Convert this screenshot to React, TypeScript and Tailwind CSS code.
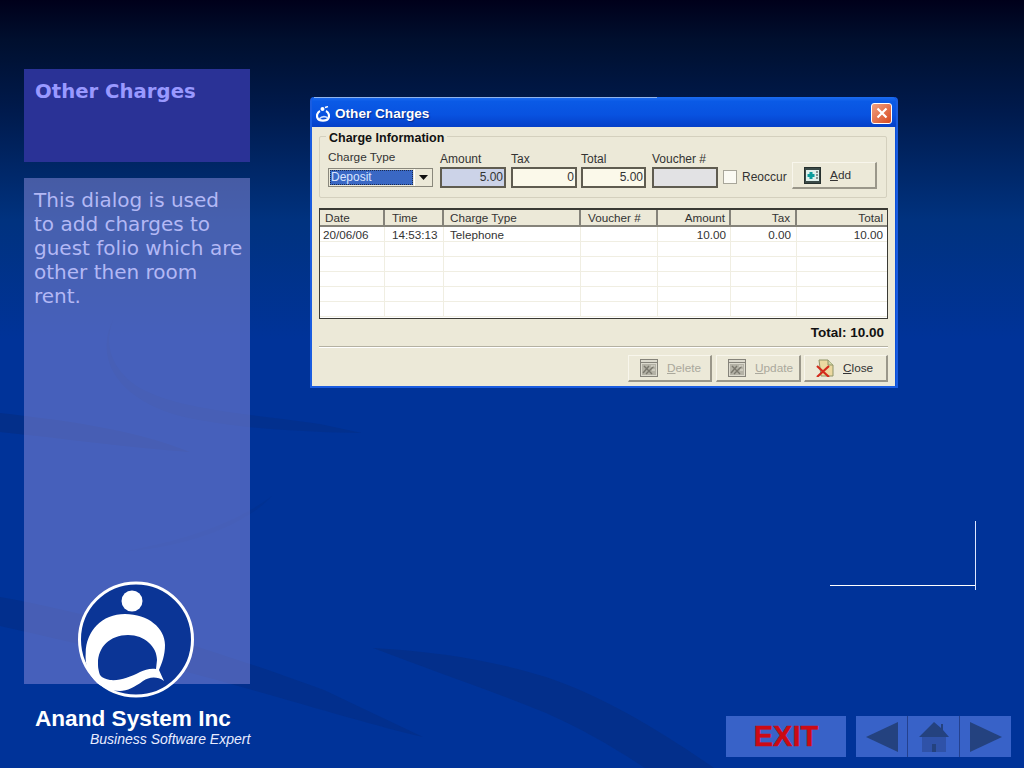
import React from 'react';

const grid = [
  { name: 'Date', w: 'w-[65px]', cell: '20/06/06', align: 'text-left pl-[5px]', cellAlign: 'text-left pl-[3px]' },
  { name: 'Time', w: 'w-[59px]', cell: '14:53:13', align: 'text-left pl-[7px]', cellAlign: 'text-left pl-[7px]' },
  { name: 'Charge Type', w: 'w-[137px]', cell: 'Telephone', align: 'text-left pl-[6px]', cellAlign: 'text-left pl-[6px]' },
  { name: 'Voucher #', w: 'w-[77px]', cell: '', align: 'text-left pl-[7px]', cellAlign: 'text-left pl-[7px]' },
  { name: 'Amount', w: 'w-[73px]', cell: '10.00', align: 'text-right pr-[4px]', cellAlign: 'text-right pr-[4px]' },
  { name: 'Tax', w: 'w-[66px]', cell: '0.00', align: 'text-right pr-[5px]', cellAlign: 'text-right pr-[5px]' },
  { name: 'Total', w: 'flex-1', cell: '10.00', align: 'text-right pr-[4px]', cellAlign: 'text-right pr-[4px]' },
];

const Background = () => (
  <svg className="absolute inset-0" width="1024" height="768" viewBox="0 0 1024 768" fill="none">
    {/* crescent */}
    <path d="M114 318 C104 340 108 368 140 388 C180 410 250 414 320 424 L362 433 C300 432 230 428 180 416 C120 400 92 360 114 318 Z" fill="#062a78" opacity="0.3" />
    {/* left band */}
    <path d="M0 413 C60 420 130 428 190 452 C130 448 60 438 0 432 Z" fill="#062a78" opacity="0.45" />
    {/* faint wisp */}
    <path d="M272 496 C240 520 190 540 120 552 C180 548 240 530 272 496 Z" fill="#062a78" opacity="0.18" />
    {/* lower bands */}
    <path d="M0 597 C100 615 200 645 324 690 L423 737 C330 715 200 670 0 626 Z" fill="#062a78" opacity="0.38" />
    <path d="M373 648 C440 652 490 660 546 677 C600 695 660 730 714 768 L645 768 C610 745 580 728 546 713 C490 690 430 670 373 648 Z" fill="#062a78" opacity="0.42" />
  </svg>
);

const Logo = () => (
  <svg width="118" height="118" viewBox="0 0 118 118">
    <circle cx="59" cy="58.5" r="56.5" fill="#0b3596" stroke="#fff" strokeWidth="3" />
    <circle cx="55" cy="20" r="10.5" fill="#fff" />
    <path d="M20 102 C10 92 8 82 8.7 72 C9 50 25 33 48 33 C71 33 88 47 88 64 C88 74 85 82 82 89 L87 100 C80 95 72 96 66 100 C58 106 50 110 43 110 C34 110 26 107 20 102 Z" fill="#fff" />
    <path d="M23 94 C21 88 21 85 21 82 C21 66 33 54 51 54 C68 54 80 66 80 79 L79 88 C73 87 68 89 63 91 C53 96 43 100 33 99 C29 98 25 97 23 94 Z" fill="#0b3596" />
  </svg>
);

const Field = ({ label, value, bg, w }: { label: string; value: string; bg: string; w: string }) => (
  <div className={`flex flex-col ${w}`}>
    <span className="text-[12px] leading-[13px] text-[#333]">{label}</span>
    <div className={`h-[21px] mt-[1px] border-2 border-[#5f5c50] ${bg} text-right pr-[1px] text-[12px] leading-[17px] text-[#333]`}>{value}</div>
  </div>
);

const AddIcon = () => (
  <svg width="17" height="17" viewBox="0 0 17 17">
    <rect x="0.5" y="0.5" width="16" height="16" fill="#3a4a48" stroke="#26302e" />
    <rect x="2" y="3" width="13" height="11" fill="#dff0ec" />
    <path d="M7 5 V12 M3.5 8.5 H10.5" stroke="#0a9c9c" strokeWidth="3" />
    <path d="M12 5 H14 M12 8 H14 M12 11 H14" stroke="#333" strokeWidth="1" />
  </svg>
);

const MutedIcon = () => (
  <svg width="18" height="18" viewBox="0 0 18 18">
    <rect x="0.5" y="0.5" width="17" height="17" fill="#dcdace" stroke="#85837a" />
    <path d="M1 3.5 H17" stroke="#85837a" />
    <rect x="2" y="5" width="14" height="11" fill="#b4b2a6" />
    <path d="M3 14 L9 7 M6 15 L14 7 M4 7 L12 15" stroke="#7a786e" strokeWidth="1.4" />
    <path d="M11 7 H15 M12 11 H15" stroke="#e4e2d6" strokeWidth="1" />
  </svg>
);

const CloseIcon = () => (
  <svg width="18" height="18" viewBox="0 0 18 18">
    <path d="M3 1 H12 L17 6 V17 H5 Z" fill="#ecd9a0" stroke="#8f9468" />
    <path d="M12 1 V6 H17" fill="#cfd6a8" stroke="#8f9468" />
    <path d="M1 7 L13 18 M13 7 L1 18" stroke="#d32a1c" strokeWidth="2.2" />
  </svg>
);

const Button = ({ icon, letter, rest, w, disabled }: { icon: React.ReactNode; letter: string; rest: string; w: string; disabled?: boolean }) => (
  <div className={`${w} h-[27px] bg-[#ece9d8] border border-[#f8f6ec] border-r-2 border-b-2 border-r-[#9a978a] border-b-[#9a978a] flex items-center pl-[11px] text-[11.8px] ${disabled ? 'text-[#aaa89c]' : 'text-[#333]'}`}>
    {icon}
    <span className="ml-[9px] mt-[1px]"><span className="underline">{letter}</span>{rest}</span>
  </div>
);

export default function App() {
  return (
    <div className="relative w-[1024px] h-[768px] overflow-hidden bg-[linear-gradient(180deg,#00001a_0px,#000f2e_40px,#001a4c_110px,#00327f_220px,#003399_340px,#003399_100%)]">
      <Background />
      <div className="relative flex h-full">
        {/* left column */}
        <div className="w-[310px] pl-[24px] pt-[69px] flex flex-col">
          <div className="w-[226px] h-[93px] bg-[#2a3296] px-[11px] pt-[11px] text-[19.7px] leading-[24px] font-bold text-[#9999ff] font-['DejaVu_Sans',sans-serif]">
            Other Charges
          </div>
          <div className="w-[226px] h-[506px] mt-[16px] bg-[#8c8ddd]/50 pl-[10px] pt-[10px] text-[20px] leading-[24px] text-[#b3b8f5] font-['DejaVu_Sans',sans-serif]">
            This dialog is used<br />to add charges to<br />guest folio which are<br />other then room<br />rent.
          </div>
          <div className="relative -mt-[103px] ml-[53px]">
            <Logo />
          </div>
          <div className="mt-[7px] ml-[11px] text-[22.6px] leading-[26px] font-bold text-white font-['Liberation_Sans',sans-serif]">
            Anand System Inc
          </div>
          <div className="ml-[66px] -mt-[1px] text-[14px] leading-[16px] italic text-[#e8ecff] font-['Liberation_Sans',sans-serif]">
            Business Software Expert
          </div>
        </div>

        {/* right column */}
        <div className="flex-1 flex flex-col pt-[97px] pb-[11px]">
          <div className="w-[588px] h-[291px] flex flex-col bg-[#0a4fd8] border-[2px] border-t-0 border-[#1a5ce0] rounded-t-[4px] font-['Liberation_Sans',sans-serif]">
            <div className="h-[30px] shrink-0 flex items-center pt-[3px] pl-[4px] pr-[4px] rounded-t-[4px] bg-[linear-gradient(180deg,#1c6cf0_0%,#0a5ae6_15%,#0852e0_60%,#0540c8_100%)]">
              <svg width="14" height="16" viewBox="0 0 14 16">
                <path d="M4 5 C1 6.5 0.5 10 1.5 12 C3 15.5 11 15.5 12.5 12 C13.5 10 13 6.5 10 5" fill="none" stroke="#fff" strokeWidth="2.2" />
                <circle cx="6.5" cy="3" r="2" fill="#fff" />
                <path d="M9 1.5 L12 0.5" stroke="#fff" strokeWidth="1.4" />
                <path d="M3 13 C6 10 9 10 12 12" fill="none" stroke="#cfe0ff" strokeWidth="1.6" />
              </svg>
              <span className="ml-[5px] mt-[1px] text-[13.6px] font-bold text-white [text-shadow:1px_1px_1px_#0a2a8a]">Other Charges</span>
              <div className="ml-auto -mt-[1px] w-[21px] h-[21px] rounded-[3px] border border-white bg-[linear-gradient(135deg,#f0a080,#d84a20)] flex items-center justify-center">
                <svg width="12" height="12" viewBox="0 0 12 12"><path d="M1.5 1.5 L10.5 10.5 M10.5 1.5 L1.5 10.5" stroke="#fff" strokeWidth="2.2" /></svg>
              </div>
            </div>

            <div className="flex-1 bg-[#ece9d8] mr-[1px] pl-[7px] pr-[7px] pt-[9px] text-[#333]">
              {/* charge information group */}
              <div className="relative h-[62px] mr-[1px] border border-[#d4d0be] rounded-[2px] flex items-start pt-[14px] pl-[8px]">
                <span className="absolute -top-[6px] left-[6px] bg-[#ece9d8] px-[3px] text-[12.5px] leading-[15px] font-bold text-[#111]">Charge Information</span>
                <div className="flex flex-col w-[112px]">
                  <span className="text-[11.8px] leading-[13px] text-[#333]">Charge Type</span>
                  <div className="mt-[4px] w-[105px] h-[19px] bg-[#ece9d8] border border-[#8a887c] flex">
                    <div className="flex-1 m-[1px] bg-[#3a68c4] text-[#d8e4ff] text-[12px] leading-[15px] pl-[1px] outline-1 outline-dotted outline-[#1a2a50] -outline-offset-1">Deposit</div>
                    <div className="w-[18px] flex items-center justify-center bg-[#ece9d8] border-l border-[#fff]">
                      <svg width="9" height="5" viewBox="0 0 9 5"><path d="M0 0 H9 L4.5 5 Z" fill="#111" /></svg>
                    </div>
                  </div>
                </div>
                <div className="flex pt-[2px]">
                  <Field label="Amount" value="5.00" bg="bg-[#ccd3e8]" w="w-[66px]" />
                  <Field label="Tax" value="0" bg="bg-[#fbf9ea]" w="w-[66px] ml-[5px]" />
                  <Field label="Total" value="5.00" bg="bg-[#fbf9ea]" w="w-[65px] ml-[4px]" />
                  <Field label="Voucher #" value="" bg="bg-[#e2e2e4]" w="w-[66px] ml-[6px]" />
                </div>
                <div className="flex items-center ml-[5px] mt-[17px]">
                  <div className="w-[14px] h-[14px] bg-[#fbfaf3] border border-[#a8a69a]" />
                  <span className="ml-[5px] text-[12px] w-[45px] whitespace-nowrap">Reoccur</span>
                </div>
                <div className="ml-[5px] mt-[11px]">
                  <Button icon={<AddIcon />} letter="A" rest="dd" w="w-[85px]" />
                </div>
              </div>

              {/* grid */}
              <div className="mt-[10px] h-[111px] border border-t-2 border-[#3a3a34] bg-white overflow-hidden text-[11.7px]">
                <div className="flex h-[17px] bg-[#ece9d8] border-b-2 border-[#85837a]">
                  {grid.map((c) => (
                    <div key={c.name} className={`${c.w} ${c.align} border-r-2 border-[#85837a] last:border-r-0 leading-[16px]`}>{c.name}</div>
                  ))}
                </div>
                {[0, 1, 2, 3, 4, 5].map((row) => (
                  <div key={row} className="flex h-[15px] border-b border-[#f0eee2]">
                    {grid.map((c) => (
                      <div key={c.name} className={`${c.w} ${c.cellAlign} border-r border-[#f0eee2] last:border-r-0 pt-[1px] leading-[14px] text-[#333]`}>{row === 0 ? c.cell : ''}</div>
                    ))}
                  </div>
                ))}
              </div>

              <div className="mt-[6px] pr-[4px] text-right text-[13.5px] leading-[16px] font-bold text-[#111]">Total: 10.00</div>
              <div className="mt-[5px] h-[2px] bg-[#b4b1a2] border-b border-white" />
              <div className="mt-[7px] flex justify-end">
                <Button icon={<MutedIcon />} letter="D" rest="elete" w="w-[84px]" disabled />
                <div className="ml-[4px]"><Button icon={<MutedIcon />} letter="U" rest="pdate" w="w-[85px]" disabled /></div>
                <div className="ml-[3px]"><Button icon={<CloseIcon />} letter="C" rest="lose" w="w-[84px]" /></div>
              </div>
            </div>
          </div>

          {/* footer nav */}
          <div className="mt-auto flex items-stretch h-[41px] pl-[416px]">
            <div className="w-[120px] bg-[#3862c8] flex items-center justify-center text-[29px] font-bold text-[#cc0a14] [-webkit-text-stroke:0.5px_#cc0a14] font-['Liberation_Sans',sans-serif]">EXIT</div>
            <div className="ml-[10px] w-[155px] flex bg-[#3862c8] divide-x divide-[#24418f]">
              <div className="flex-1 flex items-center justify-center">
                <svg width="32" height="32" viewBox="0 0 32 32"><path d="M0 16 L32 1 V31 Z" fill="#24427f" /></svg>
              </div>
              <div className="flex-1 flex items-center justify-center">
                <svg width="32" height="32" viewBox="0 0 32 32">
                  <path d="M16 1 L23 7 V3 H25 V9 L31 16 H1 Z" fill="#24427f" />
                  <path d="M4 16 H28 V31 H4 Z" fill="#2f52a8" />
                  <rect x="14" y="23" width="4" height="8" fill="#24427f" />
                </svg>
              </div>
              <div className="flex-1 flex items-center justify-center">
                <svg width="32" height="32" viewBox="0 0 32 32"><path d="M32 16 L0 1 V31 Z" fill="#24427f" /></svg>
              </div>
            </div>
          </div>
        </div>
      </div>

      {/* stray highlight along the dialog top */}
      <div className="absolute left-[314px] top-[97px] w-[343px] h-px bg-[#8fb4ee]" />
      {/* stray callout lines */}
      <div className="absolute left-[830px] top-[585px] w-[146px] h-px bg-white" />
      <div className="absolute left-[975px] top-[521px] w-px h-[69px] bg-[#dde6ff]" />
    </div>
  );
}
